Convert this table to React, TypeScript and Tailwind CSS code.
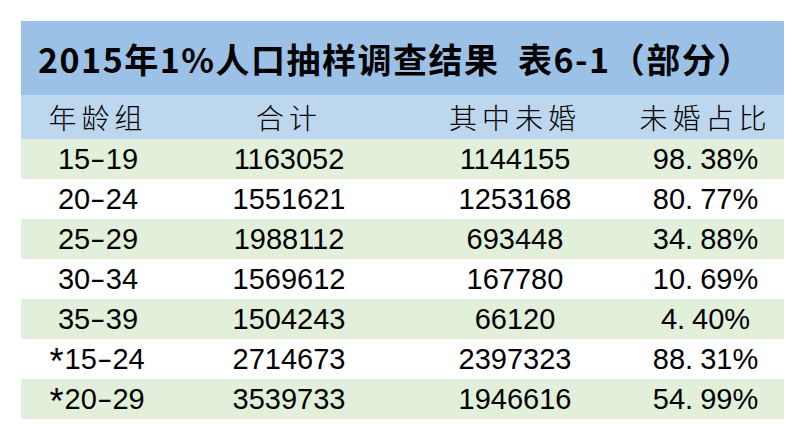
const ROWS = [
  { age: "15-19", total: "1163052", single: "1144155", rate: "98.38%" },
  { age: "20-24", total: "1551621", single: "1253168", rate: "80.77%" },
  { age: "25-29", total: "1988112", single: "693448", rate: "34.88%" },
  { age: "30-34", total: "1569612", single: "167780", rate: "10.69%" },
  { age: "35-39", total: "1504243", single: "66120", rate: "4.40%" },
  { age: "*15-24", total: "2714673", single: "2397323", rate: "88.31%" },
  { age: "*20-29", total: "3539733", single: "1946616", rate: "54.99%" },
];

const HEADERS = ["年龄组", "合计", "其中未婚", "未婚占比"];

// column widths taken from the sheet: 154 / 228 / 224 / 157
const COLS = "grid grid-cols-[154px_228px_224px_157px]";

// the sheet's font draws the period half a cell wide, so pad it a little
function Rate({ value }: { value: string }) {
  const [whole, frac] = value.split(".");
  return (
    <span>
      {whole}
      <span className="mr-[7px]">.</span>
      {frac}
    </span>
  );
}

// and its dash is about as long as a digit
function Age({ value }: { value: string }) {
  const star = value.startsWith("*");
  const [from, to] = value.replace("*", "").split("-");
  return (
    <span>
      {star && <span className="mr-[2px] inline-block translate-y-[3px] scale-125">*</span>}
      {from}
      <span className="mx-[3px] inline-block scale-x-[1.6]">-</span>
      {to}
    </span>
  );
}

export default function App() {
  return (
    <div className="h-[440px] w-[804px] bg-white pt-[21px] pl-[21px]">
      <div className="w-[763px]">
        <div className="flex h-[74px] items-center bg-[#9bc2e6] pl-[17px] text-[34px] font-bold tracking-[1.5px] text-black [font-family:'Noto_Sans_CJK_SC',sans-serif]">
          2015年1%人口抽样调查结果&nbsp;&nbsp;表6-1（部分）
        </div>
        <div
          className={`${COLS} h-[44px] items-center bg-[#bdd7ee] text-[28px] font-light tracking-[5px] text-black [font-family:'Noto_Sans_CJK_SC',sans-serif]`}
        >
          {HEADERS.map((h) => (
            <div key={h} className="text-center leading-none">
              {h}
            </div>
          ))}
        </div>
        {ROWS.map((row, i) => (
          <div
            key={row.age}
            className={`${COLS} h-[40px] items-center text-[29px] text-black [font-family:'Liberation_Sans',sans-serif] ${
              i % 2 === 0 ? "bg-[#e2efda]" : "bg-white"
            }`}
          >
            <div className="text-center leading-none">
              <Age value={row.age} />
            </div>
            <div className="text-center leading-none">{row.total}</div>
            <div className="text-center leading-none">{row.single}</div>
            <div className="text-center leading-none">
              <Rate value={row.rate} />
            </div>
          </div>
        ))}
      </div>
    </div>
  );
}
